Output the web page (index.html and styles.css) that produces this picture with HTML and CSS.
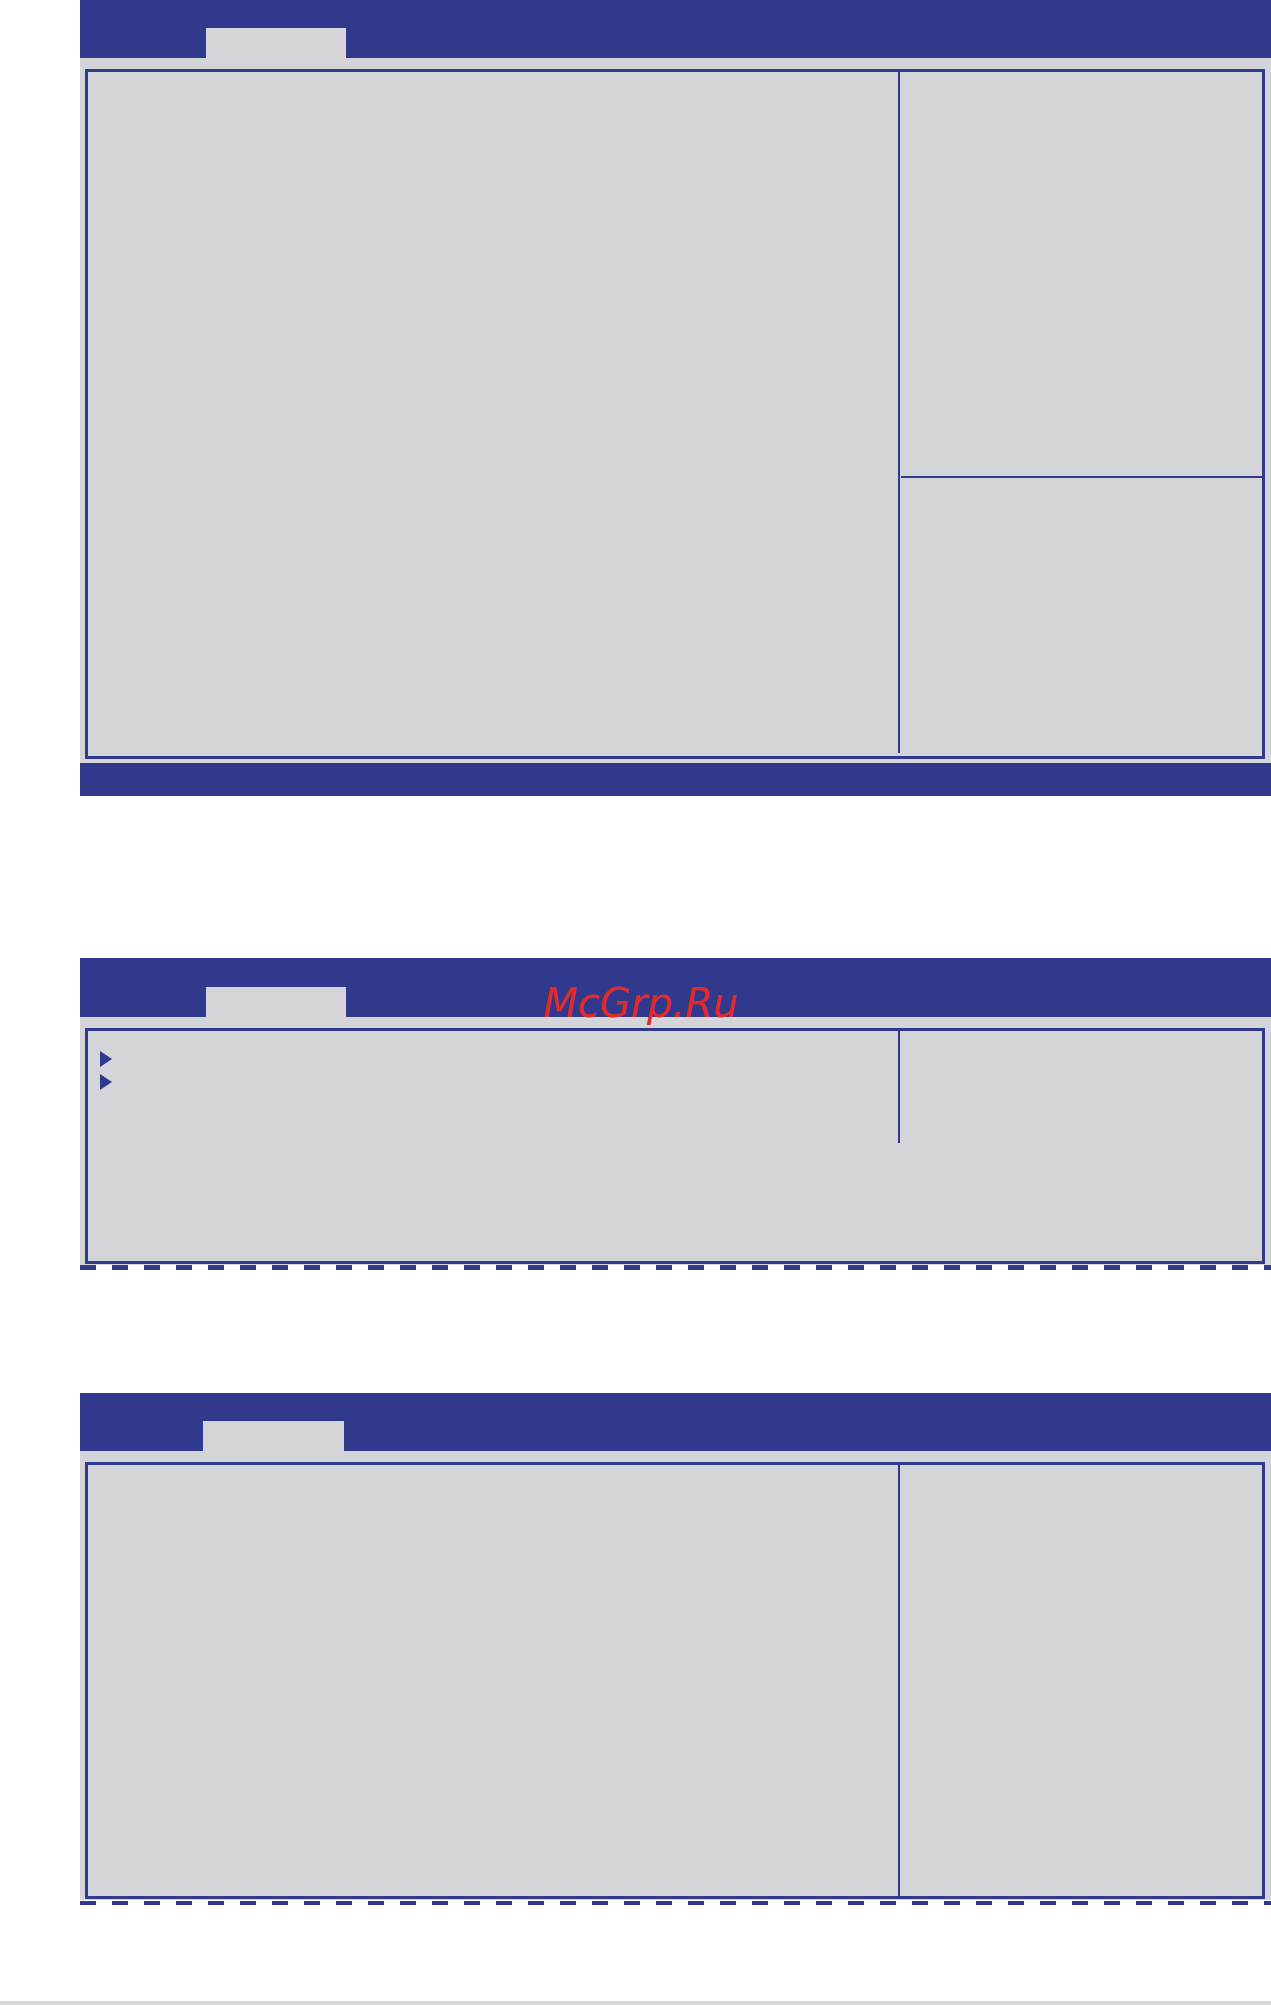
FILE: index.html
```html
<!DOCTYPE html>
<html>
<head>
<meta charset="utf-8">
<title>BIOS screens</title>
<link rel="stylesheet" href="styles.css">
</head>
<body>
<div class="page">
  <section class="screen screen-one">
    <div class="header"><div class="tab"></div></div>
    <div class="body body-one">
      <div class="box box-one">
        <div class="left"></div>
        <div class="vdiv vdiv-one"></div>
        <div class="right">
          <div class="right-top"></div>
          <div class="hdiv"></div>
          <div class="right-bottom"></div>
        </div>
      </div>
    </div>
    <div class="footer"></div>
  </section>

  <section class="screen screen-two">
    <div class="header header-two"><div class="tab"></div></div>
    <div class="body body-two">
      <div class="box box-two">
        <div class="left left-two">
          <div class="item"><span class="arrow"></span></div>
          <div class="item"><span class="arrow"></span></div>
        </div>
        <div class="vdiv vdiv-two"></div>
        <div class="right"></div>
      </div>
    </div>
    <div class="dashes"></div>
  </section>

  <section class="screen screen-three">
    <div class="header"><div class="tab tab-three"></div></div>
    <div class="body body-three">
      <div class="box box-three">
        <div class="left"></div>
        <div class="vdiv vdiv-three"></div>
        <div class="right"></div>
      </div>
    </div>
    <div class="dashes dashes-three"></div>
  </section>

  <div class="strip"></div>

  <div class="watermark">McGrp.Ru</div>
</div>
</body>
</html>
```
FILE: styles.css
```css
html, body {
  margin: 0;
  padding: 0;
  background: #fefefe;
}
body {
  font-family: "DejaVu Sans", sans-serif;
}
.page {
  position: relative;
  width: 1271px;
  height: 2005px;
}
.screen {
  margin-left: 80px;
  width: 1191px;
}
.header {
  height: 58px;
  background: #30398b;
  display: flex;
  align-items: flex-end;
}
.header-two {
  height: 59px;
}
.tab {
  margin-left: 126px;
  width: 140px;
  height: 30px;
  background: #d4d5d8;
}
.tab-three {
  margin-left: 123px;
  width: 141px;
}
.body {
  background: #d4d5d8;
  padding: 11px 6px 0 5px;
}
.body-one { height: 694px; }
.body-two { height: 237px; }
.body-three { height: 438px; }

.box {
  border: 3px solid #30398b;
  display: grid;
  grid-template-columns: 810px 2px 1fr;
  box-sizing: border-box;
}
.box-one { height: 690px; }
.box-two { height: 236px; align-items: start; }
.box-three { height: 437px; }

.vdiv {
  background: #30398b;
}
.vdiv-one {
  margin-bottom: 3px;
}
.vdiv-two {
  height: 112px;
}
.right {
  display: flex;
  flex-direction: column;
}
.right-top {
  height: 404px;
}
.hdiv {
  height: 2px;
  margin-left: 1px;
  background: #30398b;
}
.right-bottom {
  flex: 1;
}
.left-two {
  padding: 19px 0 0 12px;
  display: flex;
  flex-direction: column;
  gap: 6px;
}
.item {
  height: 17px;
  display: flex;
  align-items: center;
}
.arrow {
  width: 0;
  height: 0;
  border-top: 8.5px solid transparent;
  border-bottom: 8.5px solid transparent;
  border-left: 12px solid #30398b;
}
.footer {
  height: 33px;
  background: #30398b;
}
.screen-two {
  margin-top: 162px;
}
.screen-three {
  margin-top: 123px;
}
.dashes {
  height: 5px;
  background: repeating-linear-gradient(to right, #30398b 0, #30398b 16px, transparent 16px, transparent 32px);
}
.dashes-three {
  margin-top: 1px;
  height: 4px;
}
.strip {
  margin-top: 96px;
  height: 4px;
  background: #d9d9d9;
}
.watermark {
  position: absolute;
  left: 543px;
  top: 983px;
  font-family: "DejaVu Sans", sans-serif;
  font-style: oblique;
  font-size: 40px;
  line-height: 40px;
  color: #e02a2a;
  white-space: nowrap;
}
```
